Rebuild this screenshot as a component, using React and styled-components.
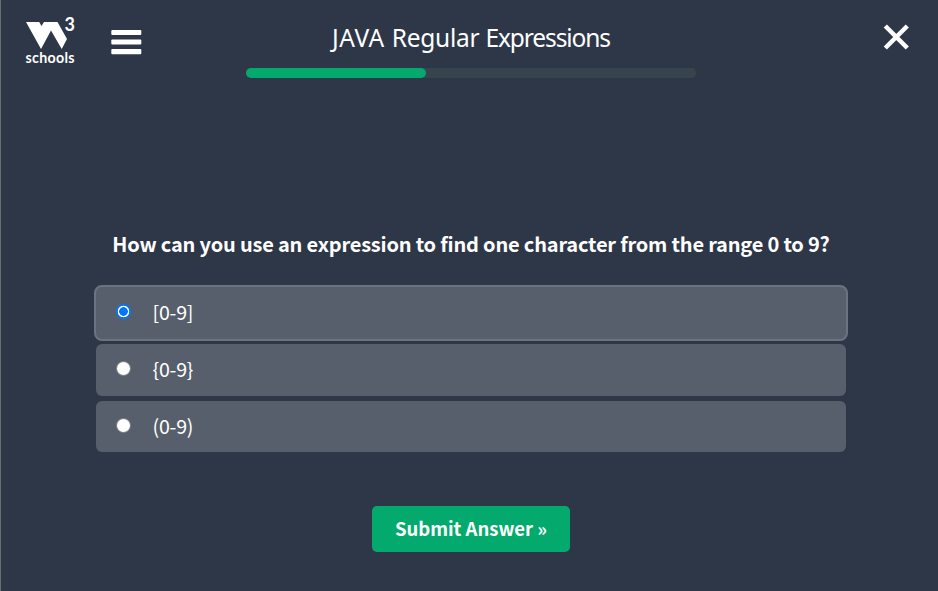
import React, { useState } from "react";
import styled, { createGlobalStyle } from "styled-components";

const GlobalStyle = createGlobalStyle`
  * { box-sizing: border-box; }
  body { margin: 0; background: #2e3748; }
`;

const sans = `"Noto Sans CJK SC", "Noto Sans", sans-serif`;

const Page = styled.div`
  width: 938px;
  height: 591px;
  overflow: hidden;
  border-left: 1px solid #6b6d70;
  background: #2e3748;
  color: #fff;
  font-family: ${sans};
`;

const Header = styled.header`
  display: grid;
  grid-template-columns: 245px 450px 242px;
  height: 78px;
`;

const HeaderLeft = styled.div`
  display: flex;
  align-items: flex-start;
  padding: 14px 0 0 19px;
`;

const LogoLink = styled.a`
  display: block;
  width: 60px;
  height: 54px;
`;

const IconButton = styled.button`
  display: block;
  padding: 0;
  border: 0;
  background: none;
  color: #fff;
  line-height: 0;
  cursor: pointer;
`;

const MenuButton = styled(IconButton)`
  margin: 16px 0 0 30px;
`;

const HeaderCenter = styled.div`
  display: flex;
  flex-direction: column;
  justify-content: space-between;
  align-items: center;
`;

const Title = styled.h1`
  margin: 20px 0 0;
  font: 400 24.5px/36px "Noto Sans", sans-serif;
  white-space: nowrap;
`;

const Word = styled.span`
  letter-spacing: ${(p) => p.$tracking}px;
`;

const Track = styled.div`
  width: 450px;
  height: 10px;
  border-radius: 5px;
  background: #38444d;
`;

const Progress = styled.div`
  width: ${(p) => p.$value}%;
  height: 100%;
  border-radius: 5px;
  background: #04aa6d;
`;

const HeaderRight = styled.div`
  display: flex;
  justify-content: flex-end;
  align-items: flex-start;
  padding: 24px 29px 0 0;
`;

const Quiz = styled.form`
  display: flex;
  flex-direction: column;
  align-items: center;
  width: 754px;
  margin: 150px 0 0 93px;
`;

const Question = styled.h2`
  margin: 0 0 26px;
  font-size: 20px;
  font-weight: 700;
  line-height: 31px;
  letter-spacing: -0.19px;
  white-space: nowrap;
`;

const Options = styled.div`
  display: flex;
  flex-direction: column;
  width: 100%;
`;

const Option = styled.label`
  display: flex;
  align-items: center;
  height: ${(p) => (p.$selected ? 56 : p.$last ? 51 : 52)}px;
  margin: ${(p) => (p.$selected ? "0 0 3px" : "0 2px 5px")};
  padding-left: 20px;
  border: ${(p) => (p.$selected ? "2px solid #6b7280" : "0")};
  border-radius: ${(p) => (p.$selected ? 8 : 6)}px;
  background: #585f6c;
  cursor: pointer;
`;

const OptionText = styled.span`
  padding-bottom: 2px;
  font-size: 19.6px;
  line-height: 28px;
  letter-spacing: -0.2px;
`;

const Radio = styled.input`
  appearance: none;
  flex: none;
  width: 15px;
  height: 15px;
  margin: 0 21.5px 3px 0;
  border: 1px solid #767676;
  border-radius: 50%;
  background: #fff;
  &:checked {
    border: 0;
    background: radial-gradient(circle, #0075ff 4px, #fff 4.6px, #fff 5.5px, #0075ff 6.1px);
  }
`;

const Submit = styled.button`
  width: 198px;
  height: 46px;
  margin-top: 49px;
  padding: 0 0 2px;
  border: 0;
  border-radius: 5px;
  background: #04aa6d;
  color: #fff;
  font: 700 18.5px/44px ${sans};
  white-space: nowrap;
  cursor: pointer;
`;

const LogoText = styled.text`
  fill: #fff;
  font-family: Lato, sans-serif;
  font-weight: 700;
`;

function Logo() {
  return (
    <svg width="60" height="54" viewBox="0 0 60 54" role="img">
      <path d="M6 8H19.2L21.5 12L24 8H37.5L47 25L41.7 35L31 16.5L21 35Z" fill="#fff" />
      <LogoText x="44.5" y="17" fontSize="18">3</LogoText>
      <LogoText x="5.5" y="49" fontSize="14.2" textLength="49">schools</LogoText>
    </svg>
  );
}

function MenuIcon() {
  return (
    <svg width="32" height="26" viewBox="0 0 32 26" fill="currentColor">
      <rect x="1.3" y="0" width="30" height="5" rx="1" />
      <rect x="1.3" y="9.5" width="30" height="5" rx="1" />
      <rect x="1.3" y="19" width="30" height="5.2" rx="1" />
    </svg>
  );
}

function CloseIcon() {
  return (
    <svg width="26" height="26" viewBox="0 0 26 26" stroke="currentColor" strokeWidth="4.5">
      <path d="M2.3 2L24.3 24M24.3 2L2.3 24" />
    </svg>
  );
}

const answers = ["[0-9]", "{0-9}", "(0-9)"];

export default function App() {
  const [picked, setPicked] = useState(0);
  return (
    <>
      <GlobalStyle />
      <Page>
        <Header>
          <HeaderLeft>
            <LogoLink><Logo /></LogoLink>
            <MenuButton aria-label="Menu"><MenuIcon /></MenuButton>
          </HeaderLeft>
          <HeaderCenter>
            <Title>
              <Word $tracking={0.5}>JAVA </Word>
              <Word $tracking={-0.25}>Regular </Word>
              <Word $tracking={-1.1}>Expressions</Word>
            </Title>
            <Track><Progress $value={40} /></Track>
          </HeaderCenter>
          <HeaderRight>
            <IconButton aria-label="Close"><CloseIcon /></IconButton>
          </HeaderRight>
        </Header>
        <Quiz onSubmit={(e) => e.preventDefault()}>
          <Question>How can you use an expression to find one character from the range 0 to 9?</Question>
          <Options>
            {answers.map((answer, i) => (
              <Option key={answer} $selected={picked === i} $last={i === answers.length - 1}>
                <Radio type="radio" name="answer" checked={picked === i} onChange={() => setPicked(i)} />
                <OptionText>{answer}</OptionText>
              </Option>
            ))}
          </Options>
          <Submit>Submit Answer »</Submit>
        </Quiz>
      </Page>
    </>
  );
}
